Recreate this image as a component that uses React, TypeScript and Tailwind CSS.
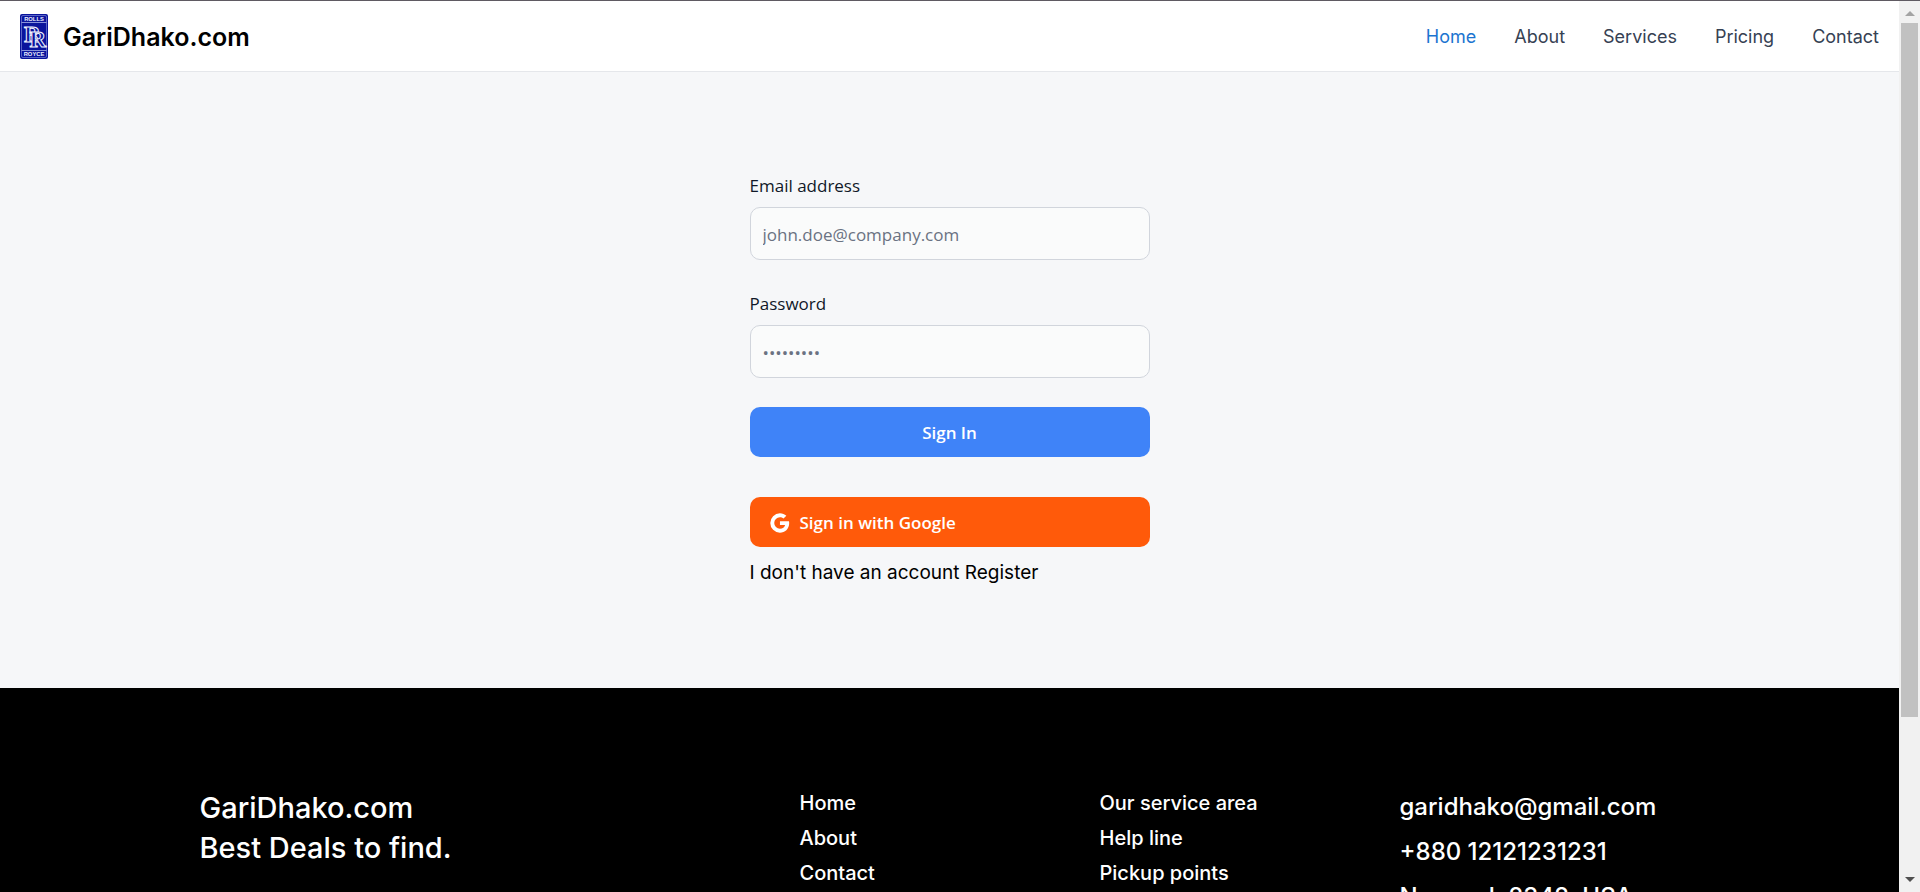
import type { ReactNode } from "react";
import { BiLogoGoogle } from "react-icons/bi";

const navLinks = ["Home", "About", "Services", "Pricing", "Contact"];
const siteLinks = ["Home", "About", "Contact"];
const serviceLinks = ["Our service area", "Help line", "Pickup points"];

function Logo() {
  return (
    <svg viewBox="0 0 28 45" className="w-7 h-[45px] mb-0.5" aria-hidden="true">
      <rect width="28" height="45" rx="2" fill="#0a149c" />
      <rect x="1.5" y="1.5" width="25" height="42" rx="1.5" fill="none" stroke="#8f9be0" strokeWidth="0.6" />
      <path d="M1.5 8.5h25M1.5 36.5h25" stroke="#aab4ea" strokeWidth="0.8" />
      <g fill="#eef0ff" fontFamily="Liberation Sans, sans-serif" fontWeight="bold" fontSize="5.8" textAnchor="middle">
        <text x="14" y="7.2">ROLLS</text>
        <text x="14" y="42.3">ROYCE</text>
      </g>
      <text
        x="4 9.5"
        y="27.5 33"
        fill="#0a149c"
        stroke="#f2f4ff"
        strokeWidth="1"
        fontFamily="Liberation Serif, serif"
        fontWeight="bold"
        fontSize="23"
      >
        RR
      </text>
    </svg>
  );
}

function Field({ id, label, children }: { id: string; label: string; children: ReactNode }) {
  return (
    <div>
      <label htmlFor={id} className="block mb-[9px] text-[17px] leading-6 font-medium text-gray-900">
        {label}
      </label>
      {children}
    </div>
  );
}

const inputStyle =
  "block w-full h-[53px] px-3 pt-0.5 rounded-[10px] border border-gray-300 bg-[#fafbfb] text-[17px] text-gray-900 placeholder:text-gray-500";

export default function App() {
  return (
    <div className="flex h-screen overflow-hidden font-['Inter',sans-serif]">
      <div className="flex-1 min-w-0 overflow-hidden bg-[#f6f7f9]">
        {/* Navbar */}
        <header className="flex items-center justify-between h-[72px] px-5 pt-0.5 bg-white border-t border-t-[#5f5a62] border-b border-b-gray-200">
          <a href="#" className="flex items-center gap-[15px]">
            <Logo />
            <span className="text-[25px] leading-8 font-semibold text-black">GariDhako.com</span>
          </a>
          <nav className="flex gap-[38px] text-[18px] leading-6">
            {navLinks.map((link) => (
              <a key={link} href="#" className={link === "Home" ? "text-[#1c74d0]" : "text-gray-700"}>
                {link}
              </a>
            ))}
          </nav>
        </header>

        {/* Sign in form */}
        <main className="pt-[102px] pb-[101px]">
          <form className="w-full max-w-[400px] mx-auto font-['Open_Sans',sans-serif]">
            <div className="flex flex-col gap-8">
              <Field id="email" label="Email address">
                <input id="email" type="email" placeholder="john.doe@company.com" className={inputStyle} />
              </Field>
              <Field id="password" label="Password">
                <input id="password" type="password" placeholder="•••••••••" className={inputStyle} />
              </Field>
            </div>
            <button type="submit" className="w-full h-[50px] mt-[29px] pt-0.5 rounded-[10px] bg-[#3f83f8] text-white text-[17px] font-semibold">
              Sign In
            </button>
            <button type="button" className="flex items-center gap-[7px] w-full h-[50px] mt-10 px-[17px] pt-0.5 rounded-[10px] bg-[#ff5a0a] text-white text-[17px] font-semibold">
              <BiLogoGoogle size={26} />
              Sign in with Google
            </button>
            <p className="mt-3 text-[19px] leading-7 text-black font-['Inter',sans-serif]">
              I don&apos;t have an account <a href="#">Register</a>
            </p>
          </form>
        </main>

        {/* Footer */}
        <footer className="bg-black text-white pt-24 pb-24">
          <div className="grid grid-cols-5 max-w-[1500px] mx-auto">
            <div className="col-span-2 pt-1 text-[29px] leading-10 font-medium">
              <p>GariDhako.com</p>
              <p>Best Deals to find.</p>
            </div>
            <ul className="pt-0.5 text-[20px] leading-[35px] font-medium">
              {siteLinks.map((link) => (
                <li key={link}><a href="#">{link}</a></li>
              ))}
            </ul>
            <ul className="pt-0.5 text-[20px] leading-[35px] font-medium">
              {serviceLinks.map((link) => (
                <li key={link}><a href="#">{link}</a></li>
              ))}
            </ul>
            <address className="not-italic text-[24px] leading-[45px] font-medium">
              <p>garidhako@gmail.com</p>
              <p>+880 12121231231</p>
              <p>Newyork 2342, USA</p>
            </address>
          </div>
        </footer>
      </div>

      {/* Scrollbar */}
      <div className="flex flex-col items-center w-[21px] py-[10px] border-t border-t-[#5f5a62] bg-[#f1f1f1]" aria-hidden="true">
        <svg viewBox="0 0 10 5" className="w-[10px] h-[5px] shrink-0"><path d="M5 0l5 5H0z" fill="#a3a3a3" /></svg>
        <div className="w-[17px] grow-[13] mt-[7px] bg-[#c1c1c1]" />
        <div className="grow-[3]" />
        <svg viewBox="0 0 10 5" className="w-[10px] h-[5px] shrink-0"><path d="M0 0h10L5 5z" fill="#505050" /></svg>
      </div>
    </div>
  );
}
